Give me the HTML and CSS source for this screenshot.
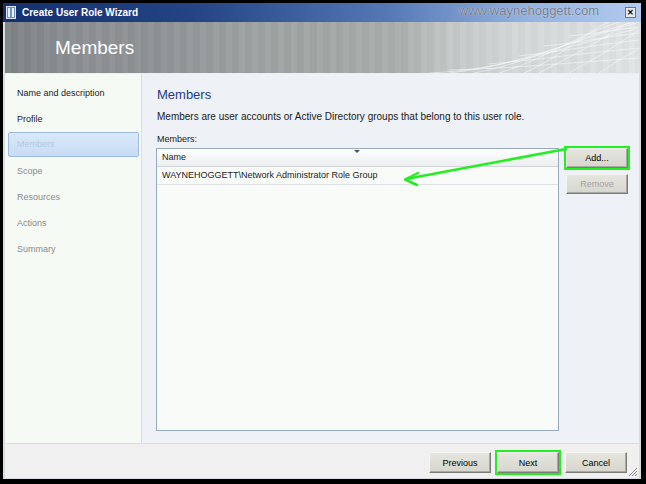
FILE: index.html
```html
<!DOCTYPE html>
<html lang="en">
<head>
  <meta charset="UTF-8">
  <title>Create User Role Wizard</title>
  <link rel="stylesheet" href="styles.css">
</head>
<body>
  <div class="window">
    <div class="titlebar">
      <svg class="app-icon" width="10" height="13" viewBox="0 0 10 13">
        <rect x="0.5" y="0.5" width="9" height="12" fill="#6f8fc8" stroke="#dbe5f5"/>
        <rect x="2" y="2" width="2" height="9" fill="#eef3fb"/>
        <rect x="6" y="2" width="2" height="9" fill="#eef3fb"/>
      </svg>
      <span class="title">Create User Role Wizard</span>
      <span class="watermark">www.waynehoggett.com</span>
      <span class="close">&#x2715;</span>
    </div>

    <div class="banner">
      <h1>Members</h1>
      <svg class="mesh" width="210" height="51" viewBox="0 0 210 51">
        <g fill="none" stroke="#ffffff" stroke-opacity="0.6" stroke-width="0.8">
          <path d="M0 51 C 70 48, 120 30, 210 6"/>
          <path d="M20 51 C 85 44, 130 24, 210 0"/>
          <path d="M45 51 C 100 41, 140 18, 205 0"/>
          <path d="M70 51 C 115 38, 150 12, 190 0"/>
          <path d="M95 51 C 130 36, 160 8, 180 0"/>
          <path d="M20 48 C 90 46, 150 40, 210 36"/>
          <path d="M60 42 C 110 38, 160 30, 210 26"/>
          <path d="M90 34 C 130 30, 170 22, 210 18"/>
          <path d="M115 24 C 150 21, 180 14, 210 11"/>
          <path d="M140 14 C 165 12, 190 7, 210 5"/>
          <path d="M110 51 L 150 30 L 178 14 L 200 0"/>
          <path d="M140 51 L 170 34 L 192 20 L 210 8"/>
          <path d="M170 51 L 190 38 L 210 27"/>
        </g>
      </svg>
    </div>

    <div class="main">
      <ul class="steps">
        <li class="done">Name and description</li>
        <li class="done">Profile</li>
        <li class="current">Members</li>
        <li>Scope</li>
        <li>Resources</li>
        <li>Actions</li>
        <li>Summary</li>
      </ul>

      <div class="page">
        <h2>Members</h2>
        <p class="desc">Members are user accounts or Active Directory groups that belong to this user role.</p>
        <div class="label">Members:</div>
        <div class="list-row">
          <div class="listview">
            <div class="lv-head">
              <span>Name</span>
              <i class="sort"></i>
            </div>
            <div class="lv-item">WAYNEHOGGETT\Network Administrator Role Group</div>
          </div>
          <div class="side-buttons">
            <button class="btn marked">Add...</button>
            <button class="btn" disabled>Remove</button>
          </div>
        </div>
      </div>
    </div>

    <div class="footer">
      <button class="btn">Previous</button>
      <button class="btn marked">Next</button>
      <button class="btn">Cancel</button>
      <svg class="grip" width="11" height="11" viewBox="0 0 11 11">
        <g stroke="#8a8a8a" stroke-width="1">
          <path d="M10 2 L2 10"/>
          <path d="M10 5 L5 10"/>
          <path d="M10 8 L8 10"/>
        </g>
      </svg>
    </div>
  </div>

  <!-- callout drawn over the screenshot -->
  <svg class="callout" width="646" height="484" viewBox="0 0 646 484">
    <g fill="none" stroke="#22ee22" stroke-width="2.5" stroke-linecap="round" stroke-linejoin="round">
      <path d="M566 149 L406 179"/>
      <path d="M418 173 L405 179.5 L417 185"/>
    </g>
  </svg>
</body>
</html>
```

FILE: styles.css
```css
body {
  margin: 0;
  width: 646px;
  height: 484px;
  background: #000;
  position: relative;
  overflow: hidden;
  font-family: "Liberation Sans", Arial, sans-serif;
  font-size: 9px;
  color: #1a1a1a;
}
.window {
  margin: 3px 0 0 3px;
  width: 638px;
  height: 476px;
  box-sizing: border-box;
  padding: 0 2px 1px 2px;
  background: #d9dde3;
  display: flex;
  flex-direction: column;
}
.titlebar {
  height: 19px;
  margin: 0 -2px;
  padding: 0 4px 0 3px;
  display: flex;
  align-items: center;
  background: linear-gradient(to right, #13306f 0%, #244484 30%, #5577b4 60%, #93b2e0 82%, #b3cbee 100%);
}
.app-icon {
  margin-right: 6px;
}
.title {
  color: #fff;
  font-weight: bold;
  font-size: 10px;
}
.watermark {
  margin-left: auto;
  margin-right: 26px;
  font-size: 13px;
  color: #6f7c8d;
  text-shadow: 0 0 1px #e6eefa;
  position: relative;
  top: -2px;
}
.close {
  width: 11px;
  height: 11px;
  box-sizing: border-box;
  border: 1px solid #6d7380;
  background: #e6e8ec;
  color: #000;
  font-size: 8px;
  font-weight: bold;
  line-height: 9px;
  text-align: center;
  margin-right: 1px;
}
.banner {
  height: 52px;
  box-sizing: border-box;
  border-bottom: 1px solid #eef0f0;
  position: relative;
  display: flex;
  align-items: center;
  background:
    repeating-linear-gradient(90deg, rgba(255,255,255,0.03) 0 6px, rgba(0,0,0,0.02) 6px 13px),
    linear-gradient(to right, #7d8285 0%, #8c9093 12%, #8f9395 24%, #9ca1a2 38%, #a3a8a6 52%, #aaafad 62%, #c3c7c7 70%, #d3d7d7 80%, #e1e4e5 100%);
}
.banner h1 {
  margin: 0 0 0 50px;
  font-weight: normal;
  font-size: 19px;
  color: #fff;
}
.mesh {
  position: absolute;
  right: 0;
  top: 0;
}
.main {
  height: 369px;
  display: flex;
}
.steps {
  width: 137px;
  box-sizing: border-box;
  margin: 0;
  padding: 6px 2px 0 3px;
  list-style: none;
  background: #f6faf5;
  border-right: 1px solid #dcdfe2;
}
.steps li {
  height: 26px;
  line-height: 26px;
  padding-left: 9px;
  color: #8a8a8a;
  box-sizing: border-box;
}
.steps li.done {
  color: #1a1a1a;
}
.steps li.current {
  height: 25px;
  line-height: 23px;
  margin-bottom: 1px;
  padding-left: 8px;
  color: #b3c9e4;
  border: 1px solid #9dbbe0;
  border-radius: 2px;
  background: linear-gradient(#d9e8f8, #c7dcf3);
}
.page {
  flex: 1;
  padding: 12px 11px 0 14px;
  background: #eef2f7;
}
.page h2 {
  margin: 0;
  padding-left: 1px;
  font-size: 13px;
  line-height: 18px;
  font-weight: normal;
  color: #1f3b86;
}
.desc {
  margin: 6px 0 0 1px;
  font-size: 10px;
  line-height: 14px;
}
.label {
  margin: 8px 0 0 1px;
  line-height: 14px;
}
.list-row {
  margin-top: 2px;
  display: flex;
  gap: 7px;
}
.listview {
  width: 403px;
  height: 283px;
  box-sizing: border-box;
  border: 1px solid #97aac2;
  background: #f9fbf8;
}
.lv-head {
  height: 17px;
  line-height: 17px;
  padding-left: 5px;
  border-bottom: 1px solid #d3d6d9;
  background: linear-gradient(#ffffff, #eceef0);
  position: relative;
}
.sort {
  position: absolute;
  left: 197px;
  top: 1px;
  width: 0;
  height: 0;
  border-left: 3px solid transparent;
  border-right: 3px solid transparent;
  border-top: 3px solid #4a5260;
}
.lv-item {
  height: 17px;
  line-height: 17px;
  padding-left: 5px;
  border-bottom: 1px solid #dde1e4;
}
.side-buttons {
  display: flex;
  flex-direction: column;
  gap: 6px;
}
.btn {
  width: 62px;
  height: 20px;
  padding: 0;
  font-family: inherit;
  font-size: 9px;
  color: #000;
  background: linear-gradient(#e6e6e0, #d6d6ce);
  border: 1px solid #7b7b78;
  border-top-color: #f4f4f0;
  border-left-color: #f4f4f0;
  box-shadow: inset -1px -1px 0 #a9a9a4;
}
.btn:disabled {
  color: #a3a3a0;
}
.btn.marked {
  outline: 2px solid #22ee22;
  outline-offset: 0;
}
.footer {
  height: 35px;
  box-sizing: border-box;
  padding: 8px 12px 0 0;
  border-top: 1px solid #dcdedc;
  background: #f0f0f0;
  display: flex;
  justify-content: flex-end;
  align-items: flex-start;
  gap: 6px;
  position: relative;
}
.footer .btn {
  height: 21px;
}
.grip {
  position: absolute;
  right: 1px;
  bottom: 1px;
}
.callout {
  position: absolute;
  left: 0;
  top: 0;
  pointer-events: none;
}
```
